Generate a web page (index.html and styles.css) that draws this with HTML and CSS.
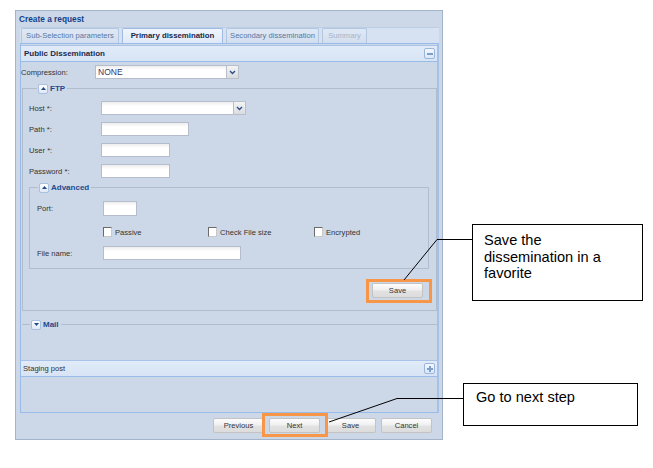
FILE: index.html
```html
<!DOCTYPE html>
<html>
<head>
<meta charset="utf-8">
<link rel="stylesheet" href="styles.css">
</head>
<body>
<div class="window">
  <div class="win-title">Create a request</div>
  <div class="tabpanel">
    <div class="tabstrip">
      <div class="tab t1">Sub-Selection parameters</div>
      <div class="tab t2 active">Primary dissemination</div>
      <div class="tab t3">Secondary dissemination</div>
      <div class="tab t4 disabled">Summary</div>
    </div>
    <div class="tabbody">
      <div class="phead">
        <span class="phead-text">Public Dissemination</span>
        <span class="tool"><span class="bar"></span></span>
      </div>
      <div class="pbody">
        <div class="row comp">
          <span class="lbl lbl-comp">Compression:</span>
          <div class="combo w-comp"><span class="val">NONE</span><span class="trig"><svg width="7" height="5" viewBox="0 0 7 5"><path d="M1 1 L3.5 3.5 L6 1" fill="none" stroke="#2a4f87" stroke-width="1.4"/></svg></span></div>
        </div>
        <div class="fs ftp">
          <div class="legend"><span class="leg-inner"><span class="tog"><svg width="5" height="3" viewBox="0 0 5 3"><path d="M0 3 L2.5 0 L5 3 Z" fill="#1f4a8a"/></svg></span><span class="leg-text">FTP</span></span></div>
          <div class="row r-first">
            <span class="lbl lbl-ftp">Host *:</span>
            <div class="combo w-host"><span class="val"></span><span class="trig"><svg width="7" height="5" viewBox="0 0 7 5"><path d="M1 1 L3.5 3.5 L6 1" fill="none" stroke="#2a4f87" stroke-width="1.4"/></svg></span></div>
          </div>
          <div class="row">
            <span class="lbl lbl-ftp">Path *:</span>
            <div class="input w-path"></div>
          </div>
          <div class="row">
            <span class="lbl lbl-ftp">User *:</span>
            <div class="input w-user"></div>
          </div>
          <div class="row">
            <span class="lbl lbl-ftp">Password *:</span>
            <div class="input w-user"></div>
          </div>
          <div class="fs adv">
            <div class="legend"><span class="leg-inner"><span class="tog"><svg width="5" height="3" viewBox="0 0 5 3"><path d="M0 3 L2.5 0 L5 3 Z" fill="#1f4a8a"/></svg></span><span class="leg-text">Advanced</span></span></div>
            <div class="row r-port">
              <span class="lbl lbl-adv">Port:</span>
              <div class="input w-port"></div>
            </div>
            <div class="checks">
              <label class="chk"><span class="box"></span>Passive</label>
              <label class="chk"><span class="box"></span>Check File size</label>
              <label class="chk"><span class="box"></span>Encrypted</label>
            </div>
            <div class="row r-file">
              <span class="lbl lbl-adv">File name:</span>
              <div class="input w-file"></div>
            </div>
          </div>
          <div class="btnrow"><span class="btn">Save</span></div>
        </div>
        <div class="fs mail">
          <div class="legend"><span class="leg-inner"><span class="tog"><svg width="5" height="3" viewBox="0 0 5 3"><path d="M0 0 L2.5 3 L5 0 Z" fill="#1f4a8a"/></svg></span><span class="leg-text">Mail</span></span></div>
        </div>
      </div>
      <div class="phead staging">
        <span class="phead-text plain">Staging post</span>
        <span class="tool"><span class="bar"></span><span class="vbar"></span></span>
      </div>
      <div class="rest"></div>
    </div>
  </div>
  <div class="footer">
    <span class="btn fbtn">Previous</span>
    <span class="btn fbtn">Next</span>
    <span class="btn fbtn">Save</span>
    <span class="btn fbtn">Cancel</span>
  </div>
</div>

<svg class="annot" width="653" height="468" viewBox="0 0 653 468">
  <rect x="367.5" y="280.5" width="63" height="21" fill="none" stroke="#f79646" stroke-width="3"/>
  <rect x="263.5" y="414.5" width="63" height="21" fill="none" stroke="#f79646" stroke-width="3"/>
  <path d="M472 239.5 L437 239.5 L404 280" fill="none" stroke="#000" stroke-width="1"/>
  <path d="M463 398.5 L397 398.5 L329 422" fill="none" stroke="#000" stroke-width="1"/>
</svg>
<div class="callout c1">Save the<br>dissemination in a<br>favorite</div>
<div class="callout c2">Go to next step</div>
</body>
</html>
```
FILE: styles.css
```css
* { box-sizing: border-box; }
html, body { margin: 0; padding: 0; background: #fff; }
body {
  width: 653px;
  height: 468px;
  position: relative;
  overflow: hidden;
  font-family: "Liberation Sans", Arial, sans-serif;
  font-size: 7.6px;
  color: #333;
}

.window {
  margin: 10px 0 0 15px;
  width: 428px;
  height: 430px;
  border: 1px solid #a3b3c8;
  background: #ccd8e7;
  padding: 0 3px 0 4px;
  display: flex;
  flex-direction: column;
}

.win-title {
  height: 16px;
  line-height: 16px;
  padding-left: 3px;
  font-weight: bold;
  font-size: 8.3px;
  color: #15428b;
  margin-left: -4px;
}

.tabpanel {
  display: flex;
  flex-direction: column;
  height: 386px;
}

.tabstrip {
  height: 16px;
  display: flex;
  align-items: flex-end;
  gap: 3px;
  padding-left: 1px;
  background: #d6e2f2;
  border-top: 1px solid #bccde4;
}

.tab {
  height: 15px;
  line-height: 14px;
  border: 1px solid #b3c6e0;
  border-bottom: none;
  border-radius: 2px 2px 0 0;
  background: linear-gradient(#dfe8f5, #d2deef);
  color: #5a76a0;
  text-align: center;
}
.t1 { width: 98px; }
.t2 { width: 101px; }
.t3 { width: 93px; }
.t4 { width: 45px; }
.tab.active {
  background: linear-gradient(#f0f5fc, #dfe9f7);
  color: #15294d;
  font-weight: bold;
  font-size: 7.8px;
  border-color: #9fbbe2;
}
.tab.disabled { color: #a8b5c6; }

.tabbody {
  flex: 1;
  border: 1px solid #99bbe8;
  border-right-width: 2px;
  border-right-color: #a6c1e8;
  display: flex;
  flex-direction: column;
}

.phead {
  margin-top: 1px;
  height: 17px;
  background: linear-gradient(#e1ebf8, #d7e4f5);
  border-top: 1px solid #a9c3e8;
  border-bottom: 1px solid #99bbe8;
  display: flex;
  align-items: center;
  justify-content: space-between;
  padding: 0 2px 0 3px;
}
.phead-text {
  font-weight: bold;
  font-size: 8px;
  color: #1b2b4d;
}
.phead-text.plain {
  font-weight: normal;
  font-size: 7.6px;
  color: #333;
  margin-left: -1px;
}
.staging { margin-top: 0; }

.tool {
  width: 11px;
  height: 11px;
  border: 1px solid #9ab6de;
  border-radius: 2px;
  background: linear-gradient(#f4f8fd, #dbe7f6);
  display: flex;
  align-items: center;
  justify-content: center;
  position: relative;
}
.tool .bar {
  width: 6px;
  height: 2px;
  background: #7f9fcb;
}
.tool .vbar {
  position: absolute;
  width: 2px;
  height: 6px;
  background: #7f9fcb;
  left: 3.5px;
  top: 1.5px;
}

.pbody {
  height: 298px;
  display: flex;
  flex-direction: column;
}

.row {
  display: flex;
  align-items: center;
  height: 14px;
  margin-top: 7px;
}
.lbl { color: #333; }
.comp { margin-top: 3px; }
.lbl-comp { width: 74px; }
.lbl-ftp { width: 72px; padding-left: 0; }
.lbl-adv { width: 66px; }

.input, .combo {
  height: 14px;
  border: 1px solid #b5bccb;
  background: linear-gradient(#ededed, #fff 4px);
}
.combo {
  display: flex;
  align-items: center;
  justify-content: space-between;
}
.combo .val {
  padding-left: 2px;
  font-size: 8.5px;
  color: #35336a;
}
.trig {
  width: 13px;
  height: 14px;
  margin: -1px -1px -1px 0;
  border: 1px solid #b9bfc9;
  background: linear-gradient(#f4f4f4, #d9dce1);
  display: flex;
  align-items: center;
  justify-content: center;
}
.w-comp { width: 144px; }
.w-host { width: 145px; }
.w-path { width: 88px; }
.w-user { width: 69px; }
.w-port { width: 34px; height: 15px; }
.w-file { width: 138px; }

.fs {
  border: 1px solid #b1bdcd;
}
.legend {
  margin-top: -6px;
  height: 11px;
  display: flex;
  align-items: center;
}
.leg-inner {
  display: flex;
  align-items: center;
  gap: 2px;
  background: #ccd8e7;
  padding: 0 2px 0 1px;
}
.leg-text {
  font-weight: bold;
  font-size: 8px;
  color: #1c4a8e;
}
.tog {
  width: 10px;
  height: 10px;
  border: 1px solid #a9c0e0;
  border-radius: 2px;
  background: linear-gradient(#ffffff, #dfe8f5);
  display: flex;
  align-items: center;
  justify-content: center;
}

.ftp {
  margin: 9px 0 0 1px;
  padding: 0 0 12px 6px;
}
.ftp > .legend { padding-left: 8px; }
.ftp .r-first { margin-top: 7px; }

.adv {
  margin: 9px 7px 0 0;
  padding: 0 0 8px 7px;
}
.adv > .legend { padding-left: 1px; }
.r-port { margin-top: 8px; height: 15px; }
.checks {
  display: grid;
  grid-template-columns: 105px 106px 100px;
  margin: 11px 0 0 66px;
  height: 10px;
}
.chk {
  display: flex;
  align-items: center;
  gap: 3px;
}
.box {
  width: 9px;
  height: 10px;
  background: #fff;
  border: 1px solid #c8c8c8;
  border-top-color: #6b6b6b;
  border-left-color: #6b6b6b;
}
.r-file { margin-top: 9px; }

.btnrow {
  display: flex;
  justify-content: flex-end;
  margin: 14px 13px 0 0;
}
.btn {
  height: 15px;
  width: 51px;
  border: 1px solid #c3c3c3;
  border-radius: 2px;
  background: linear-gradient(#fdfdfd, #f0f0f0 45%, #e2e2e2 55%, #dcdcdc);
  display: flex;
  align-items: center;
  justify-content: center;
  color: #333;
}

.mail {
  margin: 13px 0 0 1px;
  border-width: 1px 0 0 0;
}
.mail > .legend { padding-left: 8px; }

.rest { flex: 1; }

.footer {
  display: flex;
  justify-content: flex-end;
  gap: 5px;
  padding: 5px 7px 0 0;
}

.annot {
  position: absolute;
  left: 0;
  top: 0;
}
.callout {
  position: absolute;
  border: 1px solid #000;
  background: #fff;
  color: #000;
  font-family: "Liberation Sans", Arial, sans-serif;
  font-size: 14.6px;
  line-height: 16.5px;
}
.c1 {
  left: 472px;
  top: 224px;
  width: 171px;
  height: 77px;
  padding: 7px 0 0 11px;
}
.c2 {
  left: 463px;
  top: 383px;
  width: 175px;
  height: 43px;
  padding: 5px 0 0 12px;
}
```
